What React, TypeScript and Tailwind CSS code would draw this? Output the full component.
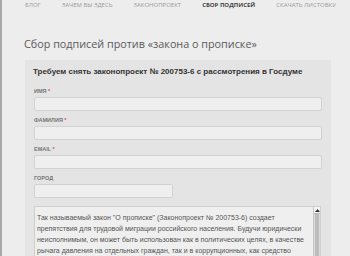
import React from 'react';

const navItems = ['Блог', 'Зачем вы здесь', 'Законопроект', 'Сбор подписей', 'Скачать листовку'];

const fields = [
  { label: 'Имя', required: true, wide: true },
  { label: 'Фамилия', required: true, wide: true },
  { label: 'Email', required: true, wide: true },
  { label: 'Город', required: false, wide: false },
];

const letter =
  'Так называемый закон "О прописке" (Законопроект № 200753-6) создает препятствия для трудовой миграции российского населения. Будучи юридически неисполнимым, он может быть использован как в политических целях, в качестве рычага давления на отдельных граждан, так и в коррупционных, как средство вымогательства.';

export default function App() {
  return (
    <div className="w-[350px] h-[256px] overflow-hidden bg-[#ededed] border-l-[2px] border-[#a9a9a9] flex flex-col">
      {/* Top nav */}
      <div className="flex items-center gap-[21px] pl-[23px] pt-[1px] h-[12px] whitespace-nowrap font-['Open_Sans',sans-serif] text-[6px] uppercase text-[#9a9a9a] leading-[9px]">
        {navItems.map((item) => (
          <span key={item} className={item === 'Сбор подписей' ? 'font-bold text-[#444]' : ''}>
            {item}
          </span>
        ))}
      </div>

      <h1 className="mt-[26px] pl-[22px] font-['Open_Sans',sans-serif] text-[10.8px] leading-[15px] text-[#5a5a5a]">
        Сбор подписей против «закона о прописке»
      </h1>

      {/* Form card */}
      <div className="mt-[9px] ml-[23px] w-[306px] flex-1 bg-[#e4e4e4] pt-[6px] pl-[8px] pr-[9px] font-['Liberation_Sans',Arial,sans-serif]">
        <div className="text-[8px] font-bold text-[#333] leading-[11px]">
          Требуем снять законопроект № 200753-6 с рассмотрения в Госдуме
        </div>

        <div className="mt-[11px] flex flex-col gap-[6px]">
          {fields.map((f) => (
            <div key={f.label} className="flex flex-col gap-[3px]">
              <div className="pl-[1px] text-[5.5px] font-bold uppercase text-[#777] leading-[6px]">
                {f.label}
                {f.required && <span className="text-[#d9534f]"> *</span>}
              </div>
              <div
                className={`h-[14px] ml-[1px] rounded-[2px] border border-[#d2d2d2] bg-[#efefef] ${
                  f.wide ? 'w-[288px]' : 'w-[139px]'
                }`}
              />
            </div>
          ))}
        </div>

        {/* Letter text */}
        <div className="mt-[8px] ml-[1px] w-[287px] h-[60px] flex border border-[#cfcfcf] bg-[#efefef] overflow-hidden">
          <div className="flex-1 pl-[2px] pt-[5px] pr-[1px] text-[7px] leading-[11px] text-[#555]">
            {letter}
          </div>
          <div className="w-[7px] bg-[#dcdcdc] border-l border-[#c8c8c8] flex flex-col">
            <div className="h-[7px] bg-[#f4f4f4] border-b border-[#bbb] flex items-center justify-center">
              <svg width="5" height="3" viewBox="0 0 5 3">
                <path d="M0 3 L2.5 0 L5 3 Z" fill="#333" />
              </svg>
            </div>
            <div className="flex-1 mx-[1px] bg-[#bdbdbd]" />
          </div>
        </div>
      </div>
    </div>
  );
}
